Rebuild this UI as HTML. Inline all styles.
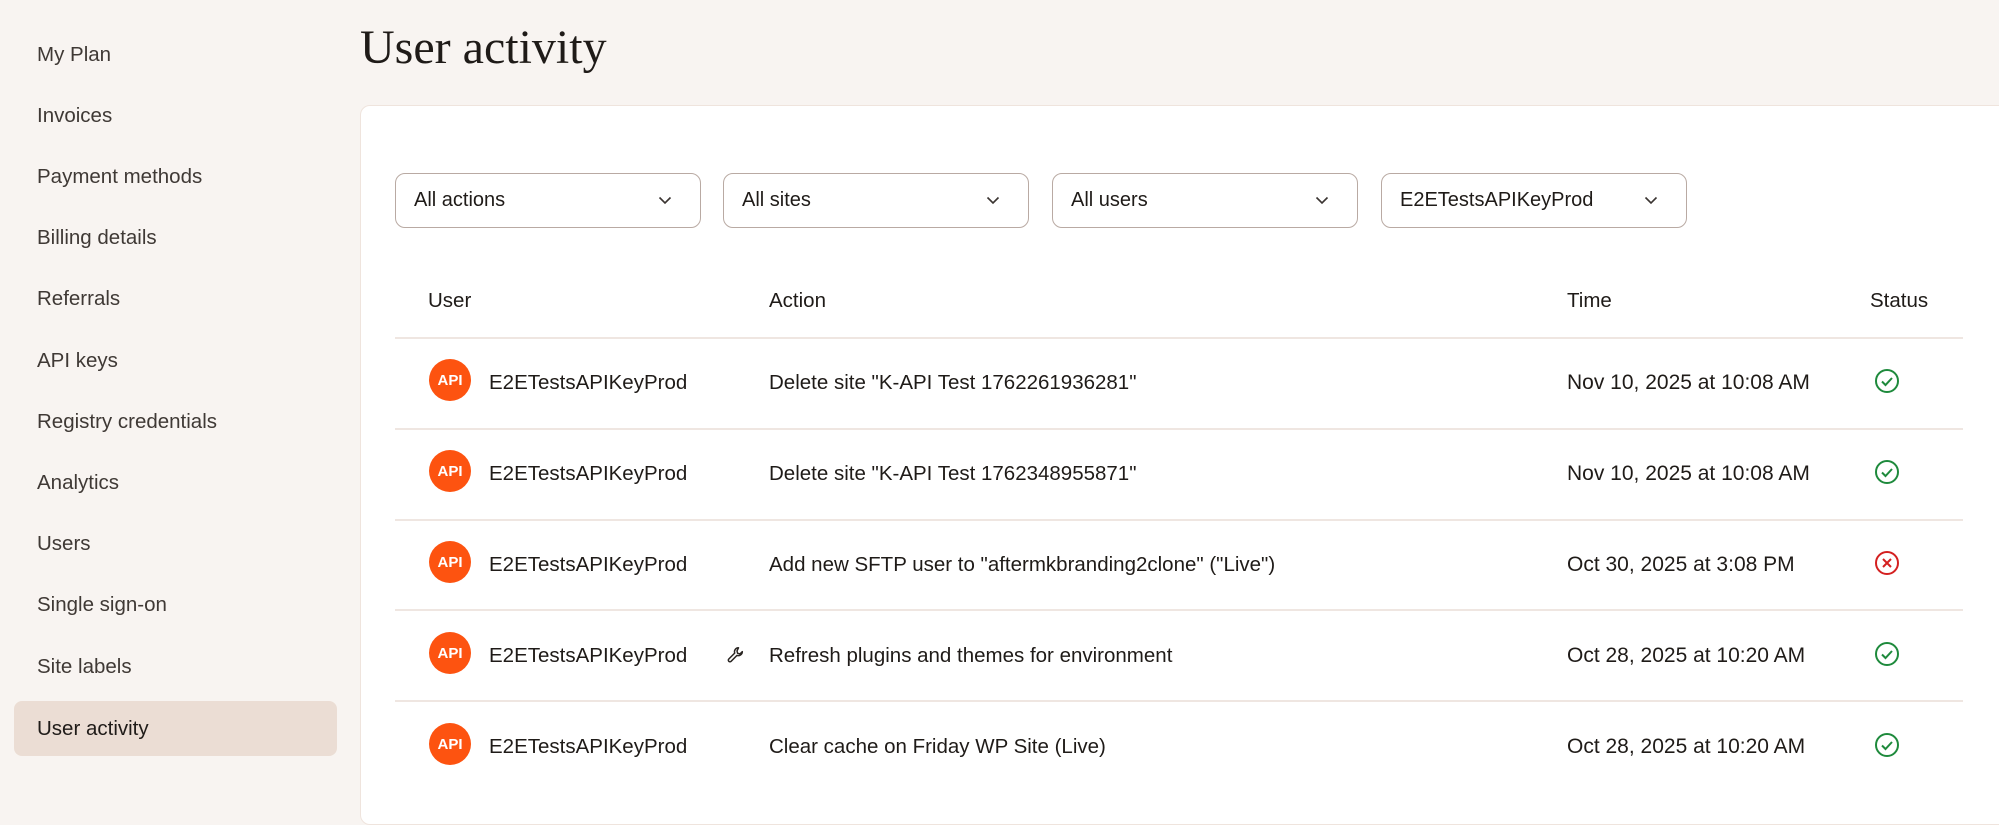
<!DOCTYPE html>
<html><head><meta charset="utf-8"><style>
*{margin:0;padding:0;box-sizing:border-box}
body{width:1999px;height:780px;overflow:hidden;background:#f8f4f1;font-family:"Liberation Sans",Arial,sans-serif;color:#1f1b18;position:relative}
.a{position:absolute;white-space:nowrap}
.nav{left:37px;font-size:20.5px;color:#3f3935;line-height:24px}
.sel{position:absolute;top:173px;width:306px;height:55px;border:1.5px solid #b9aaa3;border-radius:10px;background:#fff}
.sel span{position:absolute;left:18px;top:15px;font-size:20px;color:#1f1b18}
.sel svg{position:absolute;right:28px;top:22px}
.t{font-size:20.5px;line-height:24px;color:#1f1b18}
.tm{font-size:21px}
.line{position:absolute;left:395px;width:1568px;height:2px;background:#efe6e1}
.av{position:absolute;left:429px;width:42px;height:42px;border-radius:50%;background:#fd5310;color:#fff;font-weight:bold;font-size:15px;text-align:center;line-height:44px}
</style></head><body>
<div class="a nav" style="top:43px">My Plan</div>
<div class="a nav" style="top:104px">Invoices</div>
<div class="a nav" style="top:165px">Payment methods</div>
<div class="a nav" style="top:226px">Billing details</div>
<div class="a nav" style="top:287px">Referrals</div>
<div class="a nav" style="top:349px">API keys</div>
<div class="a nav" style="top:410px">Registry credentials</div>
<div class="a nav" style="top:471px">Analytics</div>
<div class="a nav" style="top:532px">Users</div>
<div class="a nav" style="top:593px">Single sign-on</div>
<div class="a nav" style="top:655px">Site labels</div>
<div class="a" style="left:14px;top:701px;width:323px;height:55px;border-radius:8px;background:#ebddd4"></div>
<div class="a nav" style="top:717px;color:#1f1b18">User activity</div>

<div class="a" style="left:360px;top:20px;font-family:'Liberation Serif',serif;font-size:48px;color:#1f1b18">User activity</div>

<div class="a" style="left:360px;top:105px;width:1700px;height:720px;background:#fff;border:1.5px solid #efe4dd;border-radius:10px"></div>

<div class="sel" style="left:395px"><span>All actions</span><svg width="14" height="9" viewBox="0 0 14 9"><path d="M1.5 1.5l5.5 5.5 5.5-5.5" fill="none" stroke="#3a3431" stroke-width="1.6"/></svg></div>
<div class="sel" style="left:723px"><span>All sites</span><svg width="14" height="9" viewBox="0 0 14 9"><path d="M1.5 1.5l5.5 5.5 5.5-5.5" fill="none" stroke="#3a3431" stroke-width="1.6"/></svg></div>
<div class="sel" style="left:1052px"><span>All users</span><svg width="14" height="9" viewBox="0 0 14 9"><path d="M1.5 1.5l5.5 5.5 5.5-5.5" fill="none" stroke="#3a3431" stroke-width="1.6"/></svg></div>
<div class="sel" style="left:1381px"><span>E2ETestsAPIKeyProd</span><svg width="14" height="9" viewBox="0 0 14 9"><path d="M1.5 1.5l5.5 5.5 5.5-5.5" fill="none" stroke="#3a3431" stroke-width="1.6"/></svg></div>

<div class="a t" style="left:428px;top:289px">User</div>
<div class="a t" style="left:769px;top:289px">Action</div>
<div class="a t" style="left:1567px;top:289px">Time</div>
<div class="a t" style="left:1870px;top:289px">Status</div>
<div class="line" style="top:337px"></div>

<div class="av" style="top:359px">API</div>
<div class="a t" style="left:489px;top:371px">E2ETestsAPIKeyProd</div>
<div class="a t" style="left:769px;top:371px">Delete site "K-API Test 1762261936281"</div>
<div class="a t tm" style="left:1567px;top:371px">Nov 10, 2025 at 10:08 AM</div>
<svg class="a" style="left:1874px;top:368px" width="26" height="26" viewBox="0 0 26 26"><circle cx="13" cy="13" r="11" fill="none" stroke="#1e8a3c" stroke-width="2"/><path d="M8 13.5l3.5 3.5 6.5-7" fill="none" stroke="#1e8a3c" stroke-width="2"/></svg>
<div class="line" style="top:428px"></div>

<div class="av" style="top:450px">API</div>
<div class="a t" style="left:489px;top:462px">E2ETestsAPIKeyProd</div>
<div class="a t" style="left:769px;top:462px">Delete site "K-API Test 1762348955871"</div>
<div class="a t tm" style="left:1567px;top:462px">Nov 10, 2025 at 10:08 AM</div>
<svg class="a" style="left:1874px;top:459px" width="26" height="26" viewBox="0 0 26 26"><circle cx="13" cy="13" r="11" fill="none" stroke="#1e8a3c" stroke-width="2"/><path d="M8 13.5l3.5 3.5 6.5-7" fill="none" stroke="#1e8a3c" stroke-width="2"/></svg>
<div class="line" style="top:519px"></div>

<div class="av" style="top:541px">API</div>
<div class="a t" style="left:489px;top:553px">E2ETestsAPIKeyProd</div>
<div class="a t" style="left:769px;top:553px">Add new SFTP user to "aftermkbranding2clone" ("Live")</div>
<div class="a t tm" style="left:1567px;top:553px">Oct 30, 2025 at 3:08 PM</div>
<svg class="a" style="left:1874px;top:550px" width="26" height="26" viewBox="0 0 26 26"><circle cx="13" cy="13" r="11" fill="none" stroke="#d42020" stroke-width="2"/><path d="M9 9l8 8M17 9l-8 8" fill="none" stroke="#d42020" stroke-width="2"/></svg>
<div class="line" style="top:609px"></div>

<div class="av" style="top:632px">API</div>
<div class="a t" style="left:489px;top:644px">E2ETestsAPIKeyProd</div>
<svg class="a" style="left:727px;top:646px" width="18" height="18" viewBox="0 0 18 18"><path d="M11.5 1.8a4 4 0 0 0-3.8 5.3L1.8 13a1.6 1.6 0 0 0 2.3 2.3l5.9-5.9a4 4 0 0 0 5.3-3.8l-2.3 2.3-2.4-.6-.6-2.4z" fill="none" stroke="#2a2522" stroke-width="1.5" stroke-linejoin="round"/></svg>
<div class="a t" style="left:769px;top:644px">Refresh plugins and themes for environment</div>
<div class="a t tm" style="left:1567px;top:644px">Oct 28, 2025 at 10:20 AM</div>
<svg class="a" style="left:1874px;top:641px" width="26" height="26" viewBox="0 0 26 26"><circle cx="13" cy="13" r="11" fill="none" stroke="#1e8a3c" stroke-width="2"/><path d="M8 13.5l3.5 3.5 6.5-7" fill="none" stroke="#1e8a3c" stroke-width="2"/></svg>
<div class="line" style="top:700px"></div>

<div class="av" style="top:723px">API</div>
<div class="a t" style="left:489px;top:735px">E2ETestsAPIKeyProd</div>
<div class="a t" style="left:769px;top:735px">Clear cache on Friday WP Site (Live)</div>
<div class="a t tm" style="left:1567px;top:735px">Oct 28, 2025 at 10:20 AM</div>
<svg class="a" style="left:1874px;top:732px" width="26" height="26" viewBox="0 0 26 26"><circle cx="13" cy="13" r="11" fill="none" stroke="#1e8a3c" stroke-width="2"/><path d="M8 13.5l3.5 3.5 6.5-7" fill="none" stroke="#1e8a3c" stroke-width="2"/></svg>
</body></html>
